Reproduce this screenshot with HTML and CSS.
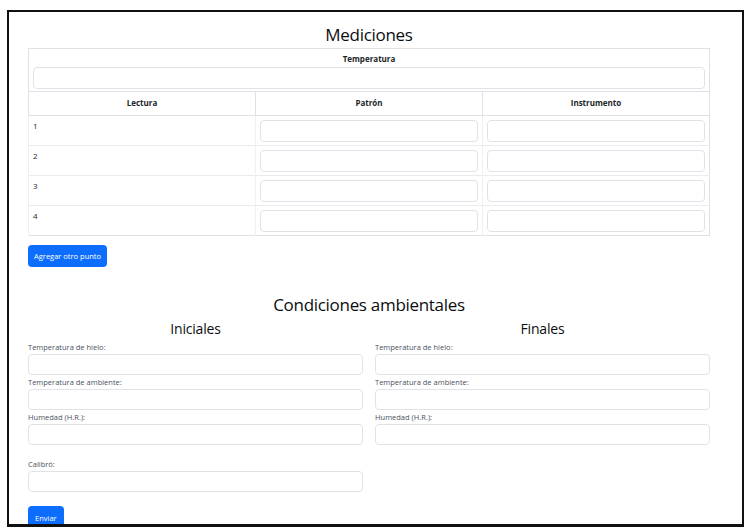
FILE: index.html
```html
<!DOCTYPE html>
<html>
<head>
	<title>Mediciones</title>
	<link rel="stylesheet" href="styles.css">
</head>
<body>
	<div class="frame">
		<h2 class="titulo">Mediciones</h2>
		<table class="tabla">
			<thead>
				<tr>
					<th colspan="3" class="temp">
						Temperatura
						<input type="text" class="campo" />
					</th>
				</tr>
				<tr>
					<th>Lectura</th>
					<th>Patrón</th>
					<th>Instrumento</th>
				</tr>
			</thead>
			<tbody>
				<tr>
					<td>1</td>
					<td><input type="text" class="campo" /></td>
					<td><input type="text" class="campo" /></td>
				</tr>
				<tr>
					<td>2</td>
					<td><input type="text" class="campo" /></td>
					<td><input type="text" class="campo" /></td>
				</tr>
				<tr>
					<td>3</td>
					<td><input type="text" class="campo" /></td>
					<td><input type="text" class="campo" /></td>
				</tr>
				<tr>
					<td>4</td>
					<td><input type="text" class="campo" /></td>
					<td><input type="text" class="campo" /></td>
				</tr>
			</tbody>
		</table>
		<button class="btn">Agregar otro punto</button>

		<h2 class="titulo titulo-cond">Condiciones ambientales</h2>
		<div class="columnas">
			<div class="col">
				<h3 class="subtitulo">Iniciales</h3>
				<label>Temperatura de hielo:</label>
				<input type="text" class="campo" />
				<label>Temperatura de ambiente:</label>
				<input type="text" class="campo" />
				<label>Humedad (H.R.):</label>
				<input type="text" class="campo" />
				<label class="calibro">Calibró:</label>
				<input type="text" class="campo" />
			</div>
			<div class="col">
				<h3 class="subtitulo">Finales</h3>
				<label>Temperatura de hielo:</label>
				<input type="text" class="campo" />
				<label>Temperatura de ambiente:</label>
				<input type="text" class="campo" />
				<label>Humedad (H.R.):</label>
				<input type="text" class="campo" />
			</div>
		</div>
		<button class="btn btn-enviar">Enviar</button>
	</div>
</body>
</html>
```

FILE: styles.css
```css
body{
	margin: 0;
	background: #fff;
	font-family: "Open Sans", "Noto Sans", sans-serif;
	color: #212529;
}

.frame{
	margin: 10px 10px 0 7px;
	border: 2px solid #111;
	border-bottom-width: 3px;
	height: 517px;
	box-sizing: border-box;
	overflow: hidden;
	padding: 0 32px 0 19px;
}

.titulo{
	margin: 11px 0 2px 0;
	text-align: center;
	font-size: 17px;
	font-weight: 500;
	letter-spacing: -0.3px;
	line-height: 23px;
	color: #0b0d0f;
}

.titulo-cond{
	margin-top: 26px;
	margin-bottom: 3px;
}

.tabla{
	width: 100%;
	border-collapse: collapse;
	border: 1px solid #dee2e6;
	font-size: 8px;
	table-layout: fixed;
}

.tabla th{
	border: 1px solid #dee2e6;
	padding: 5px 4px 6px 4px;
	line-height: 12px;
	font-weight: 700;
}

.tabla th.temp{
	padding: 4px 4px 2px 4px;
}

.tabla th.temp .campo{
	margin-top: 2px;
}

.tabla td{
	border-top: 1px solid #e9ecef;
	border-left: 1px solid #eef0f2;
	padding: 4px 4px 3px 4px;
	line-height: 12px;
	vertical-align: top;
}

.campo{
	display: block;
	width: 100%;
	height: 22px;
	box-sizing: border-box;
	border: 1px solid #dfe3e8;
	border-radius: 4px;
	background: #fff;
	margin: 0;
}

.btn{
	display: block;
	margin-top: 9px;
	height: 22px;
	padding: 0 6px;
	border: none;
	border-radius: 4px;
	background: #0d6efd;
	color: #fff;
	font-family: "Open Sans", "Noto Sans", sans-serif;
	font-size: 7.5px;
}

.btn-enviar{
	margin-top: 12px;
	height: 24px;
	padding: 0 7px;
}

.columnas{
	display: grid;
	grid-template-columns: 1fr 1fr;
	column-gap: 12px;
}

.subtitulo{
	margin: 0 0 4px 0;
	text-align: center;
	font-size: 14px;
	font-weight: 500;
	letter-spacing: -0.2px;
	line-height: 19px;
	color: #0b0d0f;
}

label{
	display: block;
	font-size: 7.5px;
	line-height: 10px;
	color: #4a5160;
	margin-bottom: 2px;
}

.col .campo{
	height: 21px;
	margin-bottom: 2px;
}

.col .calibro{
	margin-top: 14px;
}
```
